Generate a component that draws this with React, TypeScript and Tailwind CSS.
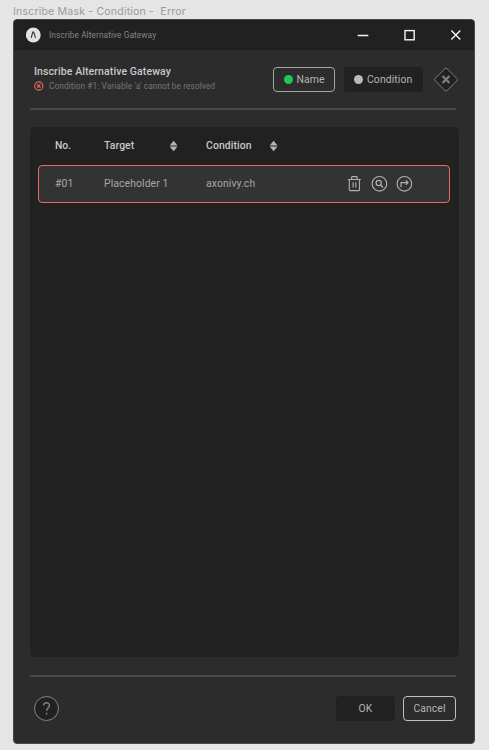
import React from "react";

function SortIcon() {
  return (
    <svg width="9" height="12" viewBox="0 0 9 12" fill="#b5b5b5" className="block shrink-0">
      <path d="M4.6 .8 8.5 5.4H.7ZM4.6 11.2.7 6.6h7.8Z" />
    </svg>
  );
}

function TitleBar() {
  return (
    <header className="flex h-[30px] items-center bg-[#212121] pl-[12px]">
      <svg width="15" height="16" viewBox="0 0 15 16" className="shrink-0">
        <circle cx="7.3" cy="8" r="7.4" fill="#e2e2e2" />
        <path d="M5.2 10.8 6.8 5h.9l1.8 5.8" fill="none" stroke="#333" strokeWidth="1.1" />
      </svg>
      <span className="ml-[8px] text-[8.3px] leading-[12px] tracking-[0.08px] text-[#858585]">Inscribe Alternative Gateway</span>
      <svg width="106" height="14" viewBox="0 0 106 14" className="mr-[11px] ml-auto shrink-0" fill="none" stroke="#f5f5f5">
        <path d="M.7 7.5h10.6" strokeWidth="1.5" />
        <rect x="48" y="2.6" width="9.2" height="9.2" strokeWidth="1.4" />
        <path d="m94.3 2.6 9 9m0-9-9 9" strokeWidth="1.4" />
      </svg>
    </header>
  );
}

function Heading() {
  return (
    <section className="flex h-[60px] items-start border-b-2 border-[#484848]">
      <div className="ml-[4px] w-[239px] shrink-0 pt-[15px]">
        <h1 className="text-[10.5px] leading-[14px] font-medium tracking-[0.1px] whitespace-nowrap text-[#c8c8c8]">Inscribe Alternative Gateway</h1>
        <div className="mt-[1px] flex items-center">
          <svg width="10" height="12" viewBox="0 0 10 12" fill="none" stroke="#f0665c" className="-mt-[1px] shrink-0">
            <circle cx="4.8" cy="6" r="4.1" strokeWidth="1.1" />
            <path d="m3.2 4.4 3.2 3.2m0-3.2L3.2 7.6" strokeWidth="1.3" />
          </svg>
          <span className="ml-[5px] text-[8.3px] leading-[12px] tracking-[0.085px] whitespace-nowrap text-[#767676]">Condition #1: Variable 'a' cannot be resolved</span>
        </div>
      </div>
      <div className="mt-[17px] flex h-[25px] w-[62px] shrink-0 items-center rounded-[4px] border border-[#a5a5a5] pl-[9.5px] text-[10.4px] text-[#b5b5b5]">
        <i className="mr-[4px] size-[9px] shrink-0 rounded-full bg-[#1fc75b]" />
        <span className="tracking-[0.1px]">Name</span>
      </div>
      <div className="mt-[17px] ml-[9px] flex h-[25px] w-[79px] shrink-0 items-center rounded-[4px] bg-[#212121] pl-[10px] text-[10.4px] text-[#b5b5b5]">
        <i className="mr-[4px] size-[9px] shrink-0 rounded-full bg-[#b9b9b9]" />
        <span className="tracking-[0.1px]">Condition</span>
      </div>
      <svg width="26" height="26" viewBox="0 0 26 26" fill="none" className="mt-[17px] ml-[10px] shrink-0">
        <path d="M12 1.7q1-1 2 0l10 9.9q1 1 0 2L14 23.5q-1 1-2 0L2 13.6q-1-1 0-2Z" fill="#212121" stroke="#7d7d7d" strokeWidth="1" />
        <path d="m9.5 9 7 7m0-7-7 7" stroke="#7d7d7d" strokeWidth="2.3" />
      </svg>
    </section>
  );
}

function ConditionTable() {
  return (
    <main className="mt-[17px] h-[530px] w-[429px] rounded-[5px] bg-[#212121] pt-[8px] pr-[9px] pl-[8px]">
      <div className="flex h-[22px] items-center pl-[17px] text-[10.4px] font-medium text-[#c8c8c8]">
        <span className="w-[49px]">No.</span>
        <span className="w-[65px] tracking-[0.1px]">Target</span>
        <SortIcon />
        <span className="ml-[28px] w-[63px] tracking-[0.1px]">Condition</span>
        <SortIcon />
      </div>
      <div className="mt-[8px] flex h-[38px] items-center rounded-[4px] border-[1.3px] border-[#ea695f] bg-[#333333] pl-[16px] text-[10.4px] tracking-[0.1px] text-[#a7a7a7]">
        <span className="w-[49px]">#01</span>
        <span className="w-[102px]">Placeholder 1</span>
        <span className="w-[141px]">axonivy.ch</span>
        <svg width="68" height="18" viewBox="0 0 68 18" fill="none" stroke="#b0b0b0" strokeWidth="1.1" className="shrink-0">
          <path d="M.9 4.5h13M4.6 4.2V2.4q0-.8.8-.8h4q.8 0 .8.8v1.8M2.3 4.6v10q0 1 1 1h8.2q1 0 1-1v-10M6.1 7.3v5.2M8.8 7.3v5.2" />
          <circle cx="32.4" cy="8.8" r="7.3" />
          <circle cx="31.7" cy="8" r="2.6" strokeWidth="1.2" />
          <path d="m33.6 10 2.4 2.4" strokeWidth="1.4" />
          <circle cx="57.4" cy="8.8" r="7.3" />
          <path d="M54 12V7.6h6.4M58.8 5.4 61 7.6 58.8 9.8" strokeWidth="1.2" />
        </svg>
      </div>
    </main>
  );
}

function Footer() {
  return (
    <footer className="mt-[18px] flex h-[60px] items-start border-t-2 border-[#484848] pt-[19px] text-[10.4px] tracking-[0.1px] text-[#b5b5b5]">
      <div className="ml-[4px] flex size-[25px] items-center justify-center rounded-full border border-[#858585] bg-[#212121]">
        <svg width="9" height="15" viewBox="0 0 9 15" fill="none" stroke="#7d7d7d" strokeWidth="1.5">
          <path d="M1.6 4.6c0-3.8 5.9-3.8 5.9 0 0 2.4-2.9 2.3-2.9 5.2M4.6 11.8v1.6" />
        </svg>
      </div>
      <div className="ml-auto flex h-[25px] w-[59px] items-center justify-center rounded-[4px] bg-[#212121]">OK</div>
      <div className="ml-[8px] flex h-[25px] w-[53px] items-center justify-center rounded-[4px] border border-[#c0c0c0]">Cancel</div>
    </footer>
  );
}

export default function App() {
  return (
    <div className="h-[750px] w-[489px] overflow-hidden bg-[#e5e5e5] font-['Roboto',sans-serif]">
      <div className="flex h-[19px] items-center pl-[13px] font-['Inter',sans-serif] text-[10.6px] tracking-[0.16px] whitespace-pre text-[#9b9b9b]">
        <span className="pt-[4px]">Inscribe Mask - Condition -  Error</span>
      </div>
      <div className="ml-[13px] h-[725px] w-[462px] overflow-hidden rounded-[4px] border border-[#484848] bg-[#2c2c2c]">
        <TitleBar />
        <div className="ml-[16px] w-[426px]">
          <Heading />
          <ConditionTable />
          <Footer />
        </div>
      </div>
    </div>
  );
}
